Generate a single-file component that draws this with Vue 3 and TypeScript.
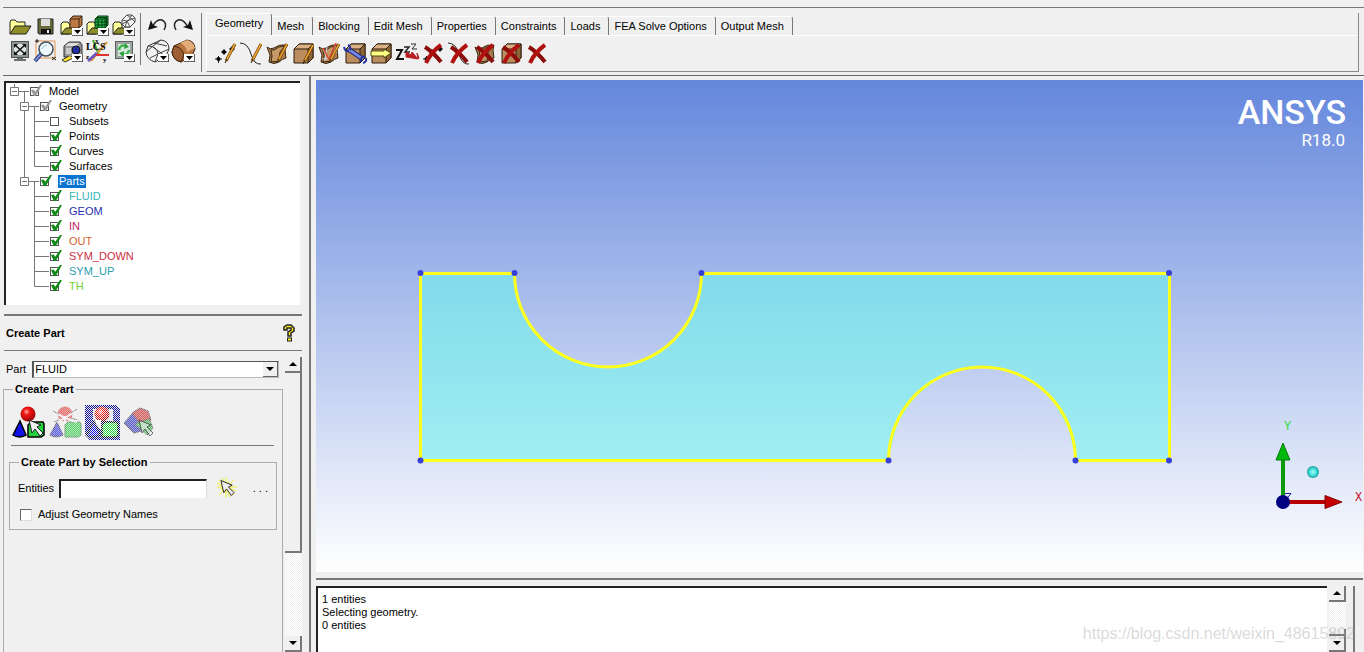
<script setup lang="ts">
import { ref } from 'vue'

interface TreeRow {
  label: string
  level: 0 | 1 | 2
  state: 'none' | 'on' | 'partial'
  color?: string
  last?: boolean
  trunk?: boolean
}

const fileIcons: string[] = ['open', 'save', 'open-geometry', 'open-mesh', 'open-blocking']
const viewIcons: string[] = ['fit', 'zoom-box', 'measure', 'lcs', 'refresh']
const historyIcons: string[] = ['undo', 'redo']
const displayIcons: string[] = ['wireframe', 'solid']
const tabs: string[] = ['Geometry', 'Mesh', 'Blocking', 'Edit Mesh', 'Properties', 'Constraints', 'Loads', 'FEA Solve Options', 'Output Mesh']
const geometryIcons: string[] = ['point', 'curve', 'surface', 'body', 'faceted', 'repair', 'transform', 'dormant', 'del-point', 'del-curve', 'del-surface', 'del-body', 'del-any']
const partIcons: string[] = ['part-select', 'part-assembly', 'part-region', 'part-material']
const messages: string[] = ['1 entities', 'Selecting geometry.', '0 entities']

const rows: TreeRow[] = [
  { label: 'Model', level: 0, state: 'partial' },
  { label: 'Geometry', level: 1, state: 'partial' },
  { label: 'Subsets', level: 2, state: 'none', trunk: true },
  { label: 'Points', level: 2, state: 'on', trunk: true },
  { label: 'Curves', level: 2, state: 'on', trunk: true },
  { label: 'Surfaces', level: 2, state: 'on', trunk: true, last: true },
  { label: 'Parts', level: 1, state: 'on', last: true },
  { label: 'FLUID', level: 2, state: 'on', color: '#35b5b8' },
  { label: 'GEOM', level: 2, state: 'on', color: '#2a2fb4' },
  { label: 'IN', level: 2, state: 'on', color: '#c01f64' },
  { label: 'OUT', level: 2, state: 'on', color: '#d9602f' },
  { label: 'SYM_DOWN', level: 2, state: 'on', color: '#cc2f42' },
  { label: 'SYM_UP', level: 2, state: 'on', color: '#2b9dae' },
  { label: 'TH', level: 2, state: 'on', color: '#72cf38', last: true },
]

const activeTab = ref('Geometry')
const selected = ref('Parts')
const part = ref('FLUID')
const entities = ref('')
const adjustNames = ref(false)

const gutter = (row: TreeRow): number => 23 + row.level * 10
</script>

<template>
  <div class="app">
    <svg class="defs" aria-hidden="true">
      <defs>
        <linearGradient id="fluid" x1="0" y1="0" x2="0" y2="1">
          <stop offset="0" stop-color="#82daea" />
          <stop offset="1" stop-color="#a0eff2" />
        </linearGradient>
        <radialGradient id="ball" cx="0.4" cy="0.35" r="0.7">
          <stop offset="0" stop-color="#ffb0a8" />
          <stop offset="0.3" stop-color="#f01818" />
          <stop offset="1" stop-color="#900" />
        </radialGradient>
        <radialGradient id="dot">
          <stop offset="0" stop-color="#a8fff8" />
          <stop offset="0.6" stop-color="#3cdcd6" />
          <stop offset="1" stop-color="#1b9c98" />
        </radialGradient>
        <pattern id="dither" width="2" height="2" patternUnits="userSpaceOnUse">
          <rect width="1" height="1" fill="#f0f0f0" />
          <rect x="1" y="1" width="1" height="1" fill="#f0f0f0" />
        </pattern>

        <symbol id="drop" viewBox="0 0 11 8">
          <rect width="11" height="8" fill="#fff" />
          <path d="M0 8H11V0" fill="none" stroke="#333" stroke-width="1.5" />
          <path d="M2 2h7l-3.500 4z" fill="#000" />
        </symbol>
        <symbol id="folder" viewBox="0 0 26 26">
          <path d="M4 21V9l1-2h4l2 2h8v4" fill="#ffff9a" stroke="#222" />
          <path d="M4 21l5-8h16l-5 8z" fill="#8f8f2a" stroke="#222" />
        </symbol>
        <symbol id="open" viewBox="0 0 26 26"><use href="#folder" /></symbol>
        <symbol id="save" viewBox="0 0 26 26">
          <path d="M6 6h15v15H7l-1-1z" fill="#666a3c" stroke="#222" />
          <rect x="9" y="6" width="9" height="7" fill="#ddd" />
          <rect x="9" y="16" width="10" height="5" fill="#111" />
          <rect x="15" y="17" width="2" height="3" fill="#eee" />
        </symbol>
        <symbol id="open-geometry" viewBox="0 0 26 26">
          <path d="M3 21V11l2-2h5l2 3v9z" fill="#ffff9a" stroke="#222" />
          <path d="M3 21l5-6h12l-4 6z" fill="#8f8f2a" stroke="#222" />
          <path d="M12 6l3-3h9v9l-3 3h-9z" fill="#bd7a45" stroke="#3b2413" />
          <path d="M12 6h9v9M21 6l3-3" fill="none" stroke="#3b2413" />
          <use href="#drop" x="14" y="15" width="11" height="8" />
        </symbol>
        <symbol id="open-mesh" viewBox="0 0 26 26">
          <path d="M3 21V11l2-2h5l2 3v9z" fill="#ffff9a" stroke="#222" />
          <path d="M3 21l5-6h12l-4 6z" fill="#8f8f2a" stroke="#222" />
          <path d="M11 6l3-3h10v9l-3 3H11z" fill="#21b548" stroke="#063b12" />
          <path d="M11 6h10v9M21 6l3-3M14 6v9M18 6v9M11 9h10l3-3M11 12h10l3-3M12.500 4.500h10v9" fill="none" stroke="#063b12" />
          <use href="#drop" x="14" y="15" width="11" height="8" />
        </symbol>
        <symbol id="open-blocking" viewBox="0 0 26 26">
          <path d="M3 21V11l2-2h5l2 3v9z" fill="#ffff9a" stroke="#222" />
          <path d="M3 21l5-6h12l-4 6z" fill="#8f8f2a" stroke="#222" />
          <path d="M12 7l5-5h5l3 3v4l-5 5h-5l-3-3z" fill="#f4f4f4" stroke="#444" />
          <path d="M12 7l5 1 3 6M17 8l8-3M17 8l-2 6M17 2l5 4 3 3M12 11l6-3 4-6" fill="none" stroke="#555" />
          <use href="#drop" x="14" y="15" width="11" height="8" />
        </symbol>
        <symbol id="fit" viewBox="0 0 26 26">
          <rect x="5.500" y="2.500" width="17" height="16" fill="#8e9696" stroke="#4b5050" />
          <rect x="8" y="5" width="12" height="11" fill="#dfe5e5" />
          <path d="M9 6l10 9M19 6L9 15" stroke="#111" stroke-width="1.500" />
          <path d="M8 5h4l-4 4zM20 5v4l-4-4zM8 16v-4l4 4zM20 16h-4l4-4z" fill="#111" />
          <path d="M11 19h6v1h3v2H8v-2h3z" fill="#6b7070" />
        </symbol>
        <symbol id="zoom-box" viewBox="0 0 26 26">
          <path d="M4 2h19v17H4z" fill="none" stroke="#e29450" />
          <path d="M3 2h4M5 0v4M20 18l4 3M24 18l-4 3" stroke="#222" />
          <path d="M9 15l-6 7" stroke="#172a70" stroke-width="4" />
          <path d="M9 15l-6 7" stroke="#7b91d8" stroke-width="2" />
          <circle cx="14" cy="10" r="7" fill="#eef8fc" stroke="#40505c" stroke-width="1.500" />
          <path d="M10 10q1-4 5-4" stroke="#9bc7da" fill="none" />
        </symbol>
        <symbol id="measure" viewBox="0 0 26 26">
          <path d="M6 7l5-4h11l2 3v12H6z" fill="#97979a" stroke="#333" />
          <path d="M7 7l4-3h10l-3 3z" fill="#ddd" />
          <circle cx="18" cy="11" r="4" fill="#2530a0" stroke="#111" />
          <rect x="8" y="9" width="5" height="6" fill="#c9c9c9" />
          <path d="M11 17l-7 4 3 2 8-4" fill="#ffe72d" stroke="#333" />
          <use href="#drop" x="14" y="15" width="11" height="8" />
        </symbol>
        <symbol id="lcs" viewBox="0 0 26 26">
          <path d="M9 1l6 15" stroke="#32a532" stroke-width="2" />
          <path d="M23 3L7 22" stroke="#e19837" stroke-width="2" />
          <path d="M4 22l9-8" stroke="#6a55bb" stroke-width="3" />
          <path d="M12 16h13" stroke="#df3430" stroke-width="2" />
          <text x="2" y="11" class="lcs-text">LCS</text>
          <text x="11" y="4" class="axis-mini">x</text>
          <text x="2" y="20" class="axis-mini">z</text>
          <text x="19" y="23" class="axis-mini">y</text>
        </symbol>
        <symbol id="refresh" viewBox="0 0 26 26">
          <rect x="5.500" y="2.500" width="17" height="17" fill="#9ba4a0" stroke="#59615d" />
          <rect x="8" y="5" width="12" height="12" fill="#d9e8de" />
          <path d="M9 11q1-6 7-4M19 11q-1 6-7 4" fill="none" stroke="#3bb54b" stroke-width="2.500" />
          <path d="M15 4l4 4-5 2zM13 18l-4-4 5-2z" fill="#2da03c" />
          <use href="#drop" x="14" y="15" width="11" height="8" />
        </symbol>
        <symbol id="undo" viewBox="0 0 26 26">
          <path d="M8 14Q13 5 18 7q6 3 2 10" fill="none" stroke="#222" stroke-width="1.500" />
          <path d="M4 17l3-10 2 5 5 2z" fill="#111" />
        </symbol>
        <symbol id="redo" viewBox="0 0 26 26">
          <path d="M18 14Q13 5 8 7q-6 3-2 10" fill="none" stroke="#222" stroke-width="1.500" />
          <path d="M23 17L20 7l-2 5-5 2z" fill="#111" />
        </symbol>
        <symbol id="wireframe" viewBox="0 0 26 26">
          <path d="M4 7L17 1q8 1 8 9l-3 7-11 6q-8-2-9-10z" fill="#f4f4f4" stroke="#333" />
          <path d="M4 7q9 0 10 8l-3 8M14 15l11-5M2 13l7-6 8-6M6 19l8-4M9 8l12 9M10 4l13 3" fill="none" stroke="#444" />
          <use href="#drop" x="14" y="15" width="11" height="8" />
        </symbol>
        <symbol id="solid" viewBox="0 0 26 26">
          <path d="M4 7L17 1q8 1 8 9l-3 7-11 6q-8-2-9-10z" fill="#b97540" stroke="#40230e" />
          <path d="M10 4l7-3q6 1 8 8l-8 4q-1-7-7-9z" fill="#e2ac7a" />
          <path d="M4 7q8 1 10 9l-3 7q-8-2-9-10z" fill="#9c6034" stroke="#40230e" />
          <use href="#drop" x="14" y="15" width="11" height="8" />
        </symbol>

        <symbol id="pencil" viewBox="0 0 12 20">
          <path d="M11 1L2 18" stroke="#7b4a10" stroke-width="3" />
          <path d="M11 1L2 18" stroke="#f0a92e" stroke-width="1.500" />
          <path d="M3 16l-2 4" stroke="#222" />
        </symbol>
        <symbol id="cross" viewBox="0 0 24 22">
          <path d="M3 4q8 5 16 15" fill="none" stroke="#8c0b0b" stroke-width="4" />
          <path d="M19 2Q9 9 4 20" fill="none" stroke="#b01010" stroke-width="4" />
        </symbol>
        <symbol id="points" viewBox="0 0 26 24">
          <path d="M2 17h7M5.500 14v7M8 10h6M11 7v6M16 7h6M19 4v6" stroke="#222" />
          <circle cx="5.500" cy="17" r="2" /><circle cx="11" cy="10" r="2" /><circle cx="19" cy="7" r="2" />
        </symbol>
        <symbol id="arc" viewBox="0 0 26 24">
          <path d="M1 1q8 0 11 11t10 10" fill="none" stroke="#222" />
        </symbol>
        <symbol id="sheet" viewBox="0 0 26 24">
          <path d="M2 5q3 3 7 1 5-4 12-3l-1 5 1 8q-4 1-7 4-5 3-10 0l1-7z" fill="#a97b4c" stroke="#3d2812" />
          <path d="M6 8l3 0q4-4 11-4l-5 6-1 9-8 1 1-6z" fill="#c79a68" stroke="#3d2812" />
        </symbol>
        <symbol id="box" viewBox="0 0 26 24">
          <path d="M3 7l5-5h14v14l-5 5H3z" fill="#ba8c5e" stroke="#2f1d0c" />
          <path d="M3 7l5-5h14l-5 5z" fill="#dab184" stroke="#2f1d0c" />
          <path d="M17 7l5-5v14l-5 5z" fill="#8d6338" stroke="#2f1d0c" />
        </symbol>
        <symbol id="point" viewBox="0 0 26 24">
          <use href="#points" /><use href="#pencil" x="11" y="1" width="12" height="20" />
        </symbol>
        <symbol id="curve" viewBox="0 0 26 24">
          <use href="#arc" /><use href="#pencil" x="11" y="1" width="12" height="20" />
        </symbol>
        <symbol id="surface" viewBox="0 0 26 24">
          <use href="#sheet" /><use href="#pencil" x="11" y="1" width="12" height="20" />
        </symbol>
        <symbol id="body" viewBox="0 0 26 24">
          <use href="#box" /><use href="#pencil" x="11" y="2" width="12" height="20" />
        </symbol>
        <symbol id="faceted" viewBox="0 0 26 24">
          <use href="#sheet" />
          <path d="M6 8l7 9 6-13M5 17l8-1 7-6M10 5l-2 14" fill="none" stroke="#cfd5e4" />
          <path d="M6 6l6 11 7-16" fill="none" stroke="#d84a2e" stroke-width="1.500" />
          <use href="#pencil" x="11" y="1" width="12" height="20" />
        </symbol>
        <symbol id="repair" viewBox="0 0 26 24">
          <use href="#box" />
          <path d="M5 7l15 10" stroke="#1b2370" stroke-width="5" />
          <path d="M5 7l15 10" stroke="#7385dc" stroke-width="3" />
          <path d="M1 5q1 5 5 4M5 3q3 1 2 5M18 20q-1-6 4-5M20 21q4-1 3-5" fill="none" stroke="#27349a" stroke-width="2" />
        </symbol>
        <symbol id="transform" viewBox="0 0 26 24">
          <use href="#box" />
          <path d="M2 9h13V7l7 4-7 5v-2H2z" fill="#ffff83" stroke="#4e4a16" />
        </symbol>
        <symbol id="dormant" viewBox="0 0 26 24">
          <path d="M1 8h6L2 17h7" fill="none" stroke="#111" stroke-width="2" />
          <path d="M9 5h5l-4 5h5" fill="none" stroke="#222" stroke-width="1.500" />
          <path d="M16 2h5l-4 5h5" fill="none" stroke="#333" />
          <path d="M11 10l5 3 1-3 6 7-1-6 2 5-1 1-6-1-6-1z" fill="#b91c22" stroke="#b91c22" />
        </symbol>
        <symbol id="del-point" viewBox="0 0 26 24"><use href="#points" /><use href="#cross" x="1" y="1" width="24" height="22" /></symbol>
        <symbol id="del-curve" viewBox="0 0 26 24"><use href="#arc" /><use href="#cross" x="1" y="1" width="24" height="22" /></symbol>
        <symbol id="del-surface" viewBox="0 0 26 24"><use href="#sheet" /><use href="#cross" x="1" y="1" width="24" height="22" /></symbol>
        <symbol id="del-body" viewBox="0 0 26 24"><use href="#box" /><use href="#cross" x="1" y="1" width="24" height="22" /></symbol>
        <symbol id="del-any" viewBox="0 0 26 24"><use href="#cross" x="1" y="1" width="24" height="22" /></symbol>

        <symbol id="solids" viewBox="0 0 36 36">
          <circle cx="17" cy="10" r="7.500" fill="url(#ball)" />
          <path d="M9 17L2 31q6 4 13 0z" fill="#1212e6" stroke="#000" stroke-width="1.500" />
          <path d="M17 21l3-3h12l1 2v11l-3 2H17z" fill="#21d43b" stroke="#000" stroke-width="1.500" />
        </symbol>
        <symbol id="cursor" viewBox="0 0 16 18">
          <path d="M1 1l12 5-4 2 6 6-3 3-5-7-3 4z" fill="#eee" stroke="#222" />
        </symbol>
        <symbol id="part-select" viewBox="0 0 36 36">
          <use href="#solids" width="36" height="36" /><use href="#cursor" x="17" y="15" width="16" height="18" />
        </symbol>
        <symbol id="part-assembly" viewBox="0 0 36 36">
          <g opacity="0.700">
            <circle cx="17" cy="10" r="7.500" fill="#e03030" />
            <path d="M9 18L2 31q6 4 13 0z" fill="#2020d8" stroke="#223" />
            <path d="M17 21l3-3h12l1 2v11l-3 2H17z" fill="#28c840" stroke="#263" />
          </g>
          <path d="M6 8l11 6 12-8M9 18l8-4 12 4M17 12v8" fill="none" stroke="#f4f4f4" stroke-width="2" />
          <path d="M5 7l6 3M29 5l-6 4M6 18l5-2M23 14l6 2" stroke="#777" />
          <rect width="36" height="36" fill="url(#dither)" opacity="0.500" shape-rendering="crispEdges" />
        </symbol>
        <symbol id="part-region" viewBox="0 0 36 36">
          <path d="M0 1h31l4 4v31H5l-5-5z" fill="#0c0c96" />
          <path d="M8 5h20v12H8z" fill="#e4e4f4" />
          <use href="#solids" width="36" height="36" />
          <rect width="36" height="36" fill="url(#dither)" shape-rendering="crispEdges" />
          <path d="M10 16h6v10l-5-6z" fill="#fff" />
        </symbol>
        <symbol id="part-material" viewBox="0 0 36 36">
          <g opacity="0.700">
            <path d="M2 19L11 9l8-1v19l-7 2z" fill="#2222b8" stroke="#224" />
            <path d="M10 9l8-5 8 3 3 9-12 2z" fill="#c82020" stroke="#422" />
            <path d="M13 20l14-5 4 9-6 7z" fill="#28a83a" stroke="#242" />
          </g>
          <rect width="36" height="36" fill="url(#dither)" opacity="0.500" shape-rendering="crispEdges" />
          <use href="#cursor" x="16" y="15" width="16" height="18" opacity="0.600" />
        </symbol>
      </defs>
    </svg>

    <header class="topbar">
      <div class="tool-group">
        <div class="tool-row">
          <button v-for="i in fileIcons" :key="i" class="tool" :aria-label="i"><svg><use :href="'#' + i" /></svg></button>
        </div>
        <div class="tool-row">
          <button v-for="i in viewIcons" :key="i" class="tool" :aria-label="i"><svg><use :href="'#' + i" /></svg></button>
        </div>
      </div>
      <div class="tool-group second">
        <div class="tool-row">
          <button v-for="i in historyIcons" :key="i" class="tool" :aria-label="i"><svg><use :href="'#' + i" /></svg></button>
        </div>
        <div class="tool-row">
          <button v-for="i in displayIcons" :key="i" class="tool" :aria-label="i"><svg><use :href="'#' + i" /></svg></button>
        </div>
      </div>
      <div class="ribbon">
        <nav class="tabs">
          <button v-for="t in tabs" :key="t" class="tab" :class="{ active: t === activeTab }" @click="activeTab = t">{{ t }}</button>
        </nav>
        <div class="ribbon-icons">
          <button v-for="i in geometryIcons" :key="i" class="geo" :aria-label="i"><svg><use :href="'#' + i" /></svg></button>
        </div>
      </div>
    </header>

    <main class="main">
      <aside class="side">
        <ul class="tree">
          <li v-for="row in rows" :key="row.label" class="row">
            <svg class="lines" :width="gutter(row)" height="15" fill="none" stroke="#777">
              <template v-if="row.level === 0">
                <path d="M8.500 0V4M12 7.500H24M18.500 8V15" />
                <path d="M4.500 3.500h8v8h-8zM6 7.500h5" />
              </template>
              <template v-else-if="row.level === 1">
                <path :d="row.last ? 'M18.500 0V4' : 'M18.500 0V4M18.500 12V15'" />
                <path d="M22 7.500H34M28.500 8V15M14.500 3.500h8v8h-8zM16 7.500h5" />
              </template>
              <template v-else>
                <path v-if="row.trunk" d="M18.500 0V15" />
                <path :d="row.last ? 'M28.500 0V7.500H44' : 'M28.500 0V15M28.500 7.500H44'" />
              </template>
            </svg>
            <label class="node">
              <input type="checkbox" class="check" :class="row.state" :checked="row.state !== 'none'" />
              <span class="name" :class="{ selected: row.label === selected }" :style="{ color: row.label === selected ? '#fff' : row.color }">{{ row.label }}</span>
            </label>
          </li>
        </ul>

        <div class="panel-head">
          <h2>Create Part</h2>
          <button class="help" aria-label="Help">
            <svg width="16" height="20" viewBox="0 0 16 20">
              <path d="M3 7V4l3-2h4l3 3v3l-3 2v3H7V9l3-2V5H6v2z" fill="#ffee21" stroke="#222" stroke-width="1.500" />
              <rect x="6.500" y="15" width="4" height="3" fill="#ffee21" stroke="#222" />
            </svg>
          </button>
        </div>

        <div class="panel">
          <div class="form">
            <div class="part-line">
              <label for="part">Part</label>
              <div class="combo">
                <select id="part" v-model="part">
                  <option v-for="r in rows.slice(7)" :key="r.label">{{ r.label }}</option>
                </select>
                <span class="combo-arrow"><svg width="8" height="4"><path d="M0 0h8l-4 4z" /></svg></span>
              </div>
            </div>
            <fieldset class="outer">
              <legend>Create Part</legend>
              <div class="part-icons">
                <button v-for="i in partIcons" :key="i" class="part-btn" :aria-label="i"><svg><use :href="'#' + i" /></svg></button>
              </div>
              <fieldset class="inner">
                <legend>Create Part by Selection</legend>
                <div class="entity-line">
                  <label for="entities">Entities</label>
                  <input id="entities" v-model="entities" type="text" />
                  <button class="pick" aria-label="Select entities">
                    <svg width="22" height="22" viewBox="0 0 22 22">
                      <path d="M10 0v21M1 10h20M3 3l15 15M18 3L3 18M6 1l8 19M1 6l19 8" stroke="#efef3a" />
                      <circle cx="10" cy="10" r="6" fill="#f3f17a" />
                      <use href="#cursor" x="4" y="2" width="15" height="18" />
                    </svg>
                  </button>
                  <button class="more">. . .</button>
                </div>
                <label class="adjust"><input v-model="adjustNames" type="checkbox" />Adjust Geometry Names</label>
              </fieldset>
            </fieldset>
          </div>
          <div class="scroll">
            <button aria-label="Scroll up"><svg width="8" height="4"><path d="M0 4h8l-4-4z" /></svg></button>
            <div class="thumb"></div>
            <div class="track"></div>
            <button aria-label="Scroll down"><svg width="8" height="4"><path d="M0 0h8l-4 4z" /></svg></button>
          </div>
        </div>
      </aside>

      <section class="work">
        <div class="viewport">
          <svg class="scene" viewBox="0 0 1047 492" preserveAspectRatio="xMidYMid meet">
            <path
              fill="url(#fluid)"
              d="M104 193H198C200 244 242 287 292 287C342 287 382 246 385 193H853V380H760L752 348L735 318L711 299L682 288L650 288L622 299L598 318L582 343L572 380H104Z"
            />
            <path
              fill="none"
              stroke="#ffff1e"
              stroke-width="3"
              d="M104.500 193.500H198.500A93.500 93.500 0 0 0 385.500 193.500H853.500V380.500H759.500A93.500 93.500 0 0 0 572.500 380.500H104.500Z"
            />
            <g fill="#3640d8">
              <circle cx="104.500" cy="193" r="3" /><circle cx="198.500" cy="193" r="3" />
              <circle cx="385.500" cy="193" r="3" /><circle cx="853" cy="193" r="3" />
              <circle cx="104.500" cy="380.500" r="3" /><circle cx="572.500" cy="380.500" r="3" />
              <circle cx="759.500" cy="380.500" r="3" /><circle cx="853" cy="380.500" r="3" />
            </g>
            <path d="M967 422V380" stroke="#0a9a0a" stroke-width="4" />
            <path d="M967 363l7 17h-14z" fill="#00b80c" stroke="#087a08" />
            <path d="M967 422h43" stroke="#b80000" stroke-width="4" />
            <path d="M1026 422l-17-6.500v13z" fill="#c40000" stroke="#8a0000" />
            <path d="M969 413.500h6l-5 6" fill="none" stroke="#20209a" />
            <circle cx="967" cy="422" r="7" fill="#000080" />
            <circle cx="997" cy="392" r="6" fill="url(#dot)" />
            <text x="968" y="350" class="axis" fill="#2cdc38">Y</text>
            <text x="1039" y="421" class="axis" fill="#c8142c">X</text>
          </svg>
          <div class="brand">
            <strong>ANSYS</strong>
            <span>R18.0</span>
          </div>
        </div>
        <div class="log">
          <div class="log-text"><p v-for="m in messages" :key="m">{{ m }}</p></div>
          <div class="scroll">
            <button aria-label="Scroll up"><svg width="8" height="4"><path d="M0 4h8l-4-4z" /></svg></button>
            <div class="track"></div>
            <div class="thumb"></div>
            <button aria-label="Scroll down"><svg width="8" height="4"><path d="M0 0h8l-4 4z" /></svg></button>
          </div>
        </div>
      </section>
    </main>
    <span class="watermark">https://blog.csdn.net/weixin_48615892</span>
  </div>
</template>

<style>
body {
  margin: 0;
  background: #f0f0f0;
}
</style>

<style scoped>
.app {
  position: relative;
  display: flex;
  flex-direction: column;
  height: 100vh;
  overflow: hidden;
  background: #f0f0f0;
  color: #000;
  font: 11px/15px "Liberation Sans", Arial, sans-serif;
}
.app * {
  box-sizing: border-box;
}
.defs {
  position: absolute;
  width: 0;
  height: 0;
}
button {
  padding: 0;
  border: 0;
  background: none;
  color: inherit;
  font: inherit;
}
svg {
  display: block;
}
.topbar {
  display: flex;
  flex: none;
  height: 69px;
  margin: 7px 0 0 3px;
  padding: 5px 5px 3px 3px;
  border-top: 1px solid #777;
  border-bottom: 1px solid #666;
}
.tool-group {
  padding-right: 4px;
  margin-bottom: 7px;
  border-right: 1px solid #777;
}
.tool-group.second {
  padding: 0 5px 0 3px;
  margin-bottom: 0;
}
.tool-row {
  display: flex;
  height: 26px;
}
.tool,
.tool svg {
  width: 26px;
  height: 26px;
}
.ribbon {
  flex: 1;
  display: flex;
  flex-direction: column;
  margin-left: 4px;
  border: 1px solid #fff;
  border-right-color: #888;
  border-bottom-color: #888;
  border-top: 0;
}
.tabs {
  display: flex;
  align-items: flex-end;
  height: 23px;
  flex: none;
  border-bottom: 1px solid #fff;
}
.tab {
  height: 19px;
  padding: 0 8px 0 5px;
  border-top: 1px solid #fff;
  border-right: 1px solid #777;
  border-top-right-radius: 3px;
  white-space: nowrap;
}
.tab.active {
  height: 22px;
  padding: 0 8px 2px 8px;
}
.ribbon-icons {
  display: flex;
  padding: 6px 0 0 6px;
}
.geo,
.geo svg {
  width: 26px;
  height: 24px;
}
.main {
  flex: 1;
  display: flex;
  min-height: 0;
}
.side {
  flex: none;
  display: flex;
  flex-direction: column;
  width: 311px;
  padding: 5px 8px 0 4px;
  border-right: 2px solid #777;
}
.tree {
  flex: none;
  margin: 0 1px 0 0;
  padding: 1px 0 11px;
  list-style: none;
  background: #fff;
  border-top: 2px solid #222;
  border-left: 2px solid #222;
}
.row {
  display: flex;
  height: 15px;
}
.node {
  display: flex;
  align-items: center;
}
.check {
  position: relative;
  appearance: none;
  width: 9px;
  height: 9px;
  margin: 0 10px 0 1px;
  border: 1px solid #555;
  background: #fff;
}
.check.on::after,
.check.partial::after {
  content: "";
  position: absolute;
  left: 0;
  top: -3px;
  width: 11px;
  height: 11px;
  background: #128a1a;
  clip-path: polygon(0 45%, 25% 40%, 38% 62%, 82% 0, 100% 0, 45% 100%, 25% 100%);
}
.check.partial::after {
  background: #999;
}
.name.selected {
  height: 13px;
  margin-left: -1px;
  padding: 0 1px;
  line-height: 13px;
  background: #0a74d0;
}
.panel-head {
  display: flex;
  align-items: center;
  justify-content: space-between;
  flex: none;
  height: 37px;
  margin: 9px -1px 0 0;
  padding: 0 5px 0 2px;
  border-top: 2px solid #777;
  border-bottom: 1px solid #777;
}
h2 {
  margin: 0;
  font-size: 11px;
  line-height: 15px;
}
.panel {
  flex: 1;
  display: flex;
  min-height: 0;
  margin-right: -1px;
  padding-top: 6px;
}
.form {
  flex: 1;
  margin-left: -1px;
  padding-top: 4px;
  min-width: 0;
  overflow: hidden;
  display: flex;
  flex-direction: column;
}
.part-line {
  display: flex;
  align-items: center;
  gap: 6px;
  padding: 0 6px 0 3px;
  flex: none;
}
.combo {
  position: relative;
  flex: 1;
}
.combo select {
  display: block;
  appearance: none;
  width: 100%;
  height: 17px;
  padding: 0 1px;
  border: 1px solid #bbb;
  border-top-color: #555;
  border-left: 2px solid #555;
  border-radius: 0;
  background: #fff;
  font: inherit;
  color: #000;
}
.combo-arrow {
  position: absolute;
  top: 1px;
  right: 1px;
  display: grid;
  place-items: center;
  width: 15px;
  height: 15px;
  background: #f0f0f0;
  border-right: 1px solid #666;
  border-bottom: 1px solid #666;
  pointer-events: none;
}
fieldset {
  margin: 0;
  min-width: 0;
  border: 1px solid #aaa;
}
legend {
  padding: 0 2px;
  font-weight: bold;
}
.outer {
  flex: 1;
  margin: 4px 2px -4px 0;
  padding: 0 5px 0 5px;
}
.outer > legend {
  margin-left: 4px;
}
.part-icons {
  display: flex;
  gap: 1px;
  margin: 7px 3px 9px 2px;
  padding-bottom: 5px;
  border-bottom: 1px solid #777;
}
.part-btn,
.part-btn svg {
  width: 36px;
  height: 36px;
}
.inner {
  padding: 0 8px 7px;
}
.inner > legend {
  margin-left: 1px;
}
.entity-line {
  display: flex;
  align-items: center;
  gap: 5px;
  height: 24px;
  margin-top: 6px;
}
.entity-line input {
  flex: 1;
  min-width: 0;
  height: 19px;
  padding: 0 3px;
  border: 0;
  border-top: 2px solid #222;
  border-left: 2px solid #222;
  border-right: 1px solid #ddd;
  background: #fff;
  font: inherit;
}
.pick {
  margin: 0 10px 0 4px;
}
.adjust {
  display: flex;
  align-items: center;
  gap: 6px;
  margin-top: 7px;
}
.adjust input {
  appearance: none;
  width: 12px;
  height: 12px;
  margin: 0 0 0 2px;
  border: 1px solid #ddd;
  border-top-color: #666;
  border-left-color: #666;
  background: #fff;
}
.scroll {
  flex: none;
  display: flex;
  flex-direction: column;
  width: 17px;
  background: repeating-conic-gradient(#fff 0 25%, #f0f0f0 0 50%) 0 0 / 2px 2px;
}
.scroll button {
  flex: none;
  display: grid;
  place-items: center;
  height: 16px;
  background: #f0f0f0;
  border-right: 2px solid #777;
  border-bottom: 2px solid #777;
}
.scroll .track {
  flex: 1;
}
.scroll .thumb {
  flex: none;
  height: 180px;
  background: #f0f0f0;
  border-right: 2px solid #777;
  border-bottom: 2px solid #777;
}
.work {
  flex: 1;
  min-width: 0;
  display: flex;
  flex-direction: column;
  padding: 4px 1px 0 5px;
}
.viewport {
  position: relative;
  flex: 1;
  min-height: 0;
  background: linear-gradient(#6487dc, #fff);
}
.scene {
  width: 100%;
  height: 100%;
}
.axis {
  font: 12px "Liberation Mono", monospace;
}
.lcs-text {
  font: bold 10px "Liberation Serif", serif;
}
.axis-mini {
  font: bold 7px "Liberation Serif", serif;
}
.brand {
  position: absolute;
  top: 13px;
  right: 17px;
  display: flex;
  flex-direction: column;
  align-items: flex-end;
  color: #fff;
}
.brand strong {
  font: 500 34px/38px Roboto, "Liberation Sans", sans-serif;
}
.brand span {
  padding-right: 1px;
  font: 17px/19px Roboto, "Liberation Sans", sans-serif;
}
.log {
  flex: none;
  display: flex;
  height: 74px;
  margin-top: 6px;
  padding-top: 6px;
  border-top: 2px solid #777;
}
.log-text {
  flex: 1;
  padding: 5px 4px;
  border-top: 2px solid #222;
  border-left: 2px solid #222;
  background: #fff;
}
.log-text p {
  margin: 0;
  line-height: 13px;
}
.log .scroll {
  width: 17px;
  margin: 0 7px 0 2px;
}
.log .scroll .thumb {
  height: 7px;
}
.log::after {
  content: "";
  width: 8px;
  border-left: 2px solid #777;
}
.watermark {
  position: absolute;
  right: 9px;
  bottom: 9px;
  color: rgba(160, 160, 160, 0.4);
  font-size: 16px;
  line-height: 18px;
  pointer-events: none;
}
</style>
